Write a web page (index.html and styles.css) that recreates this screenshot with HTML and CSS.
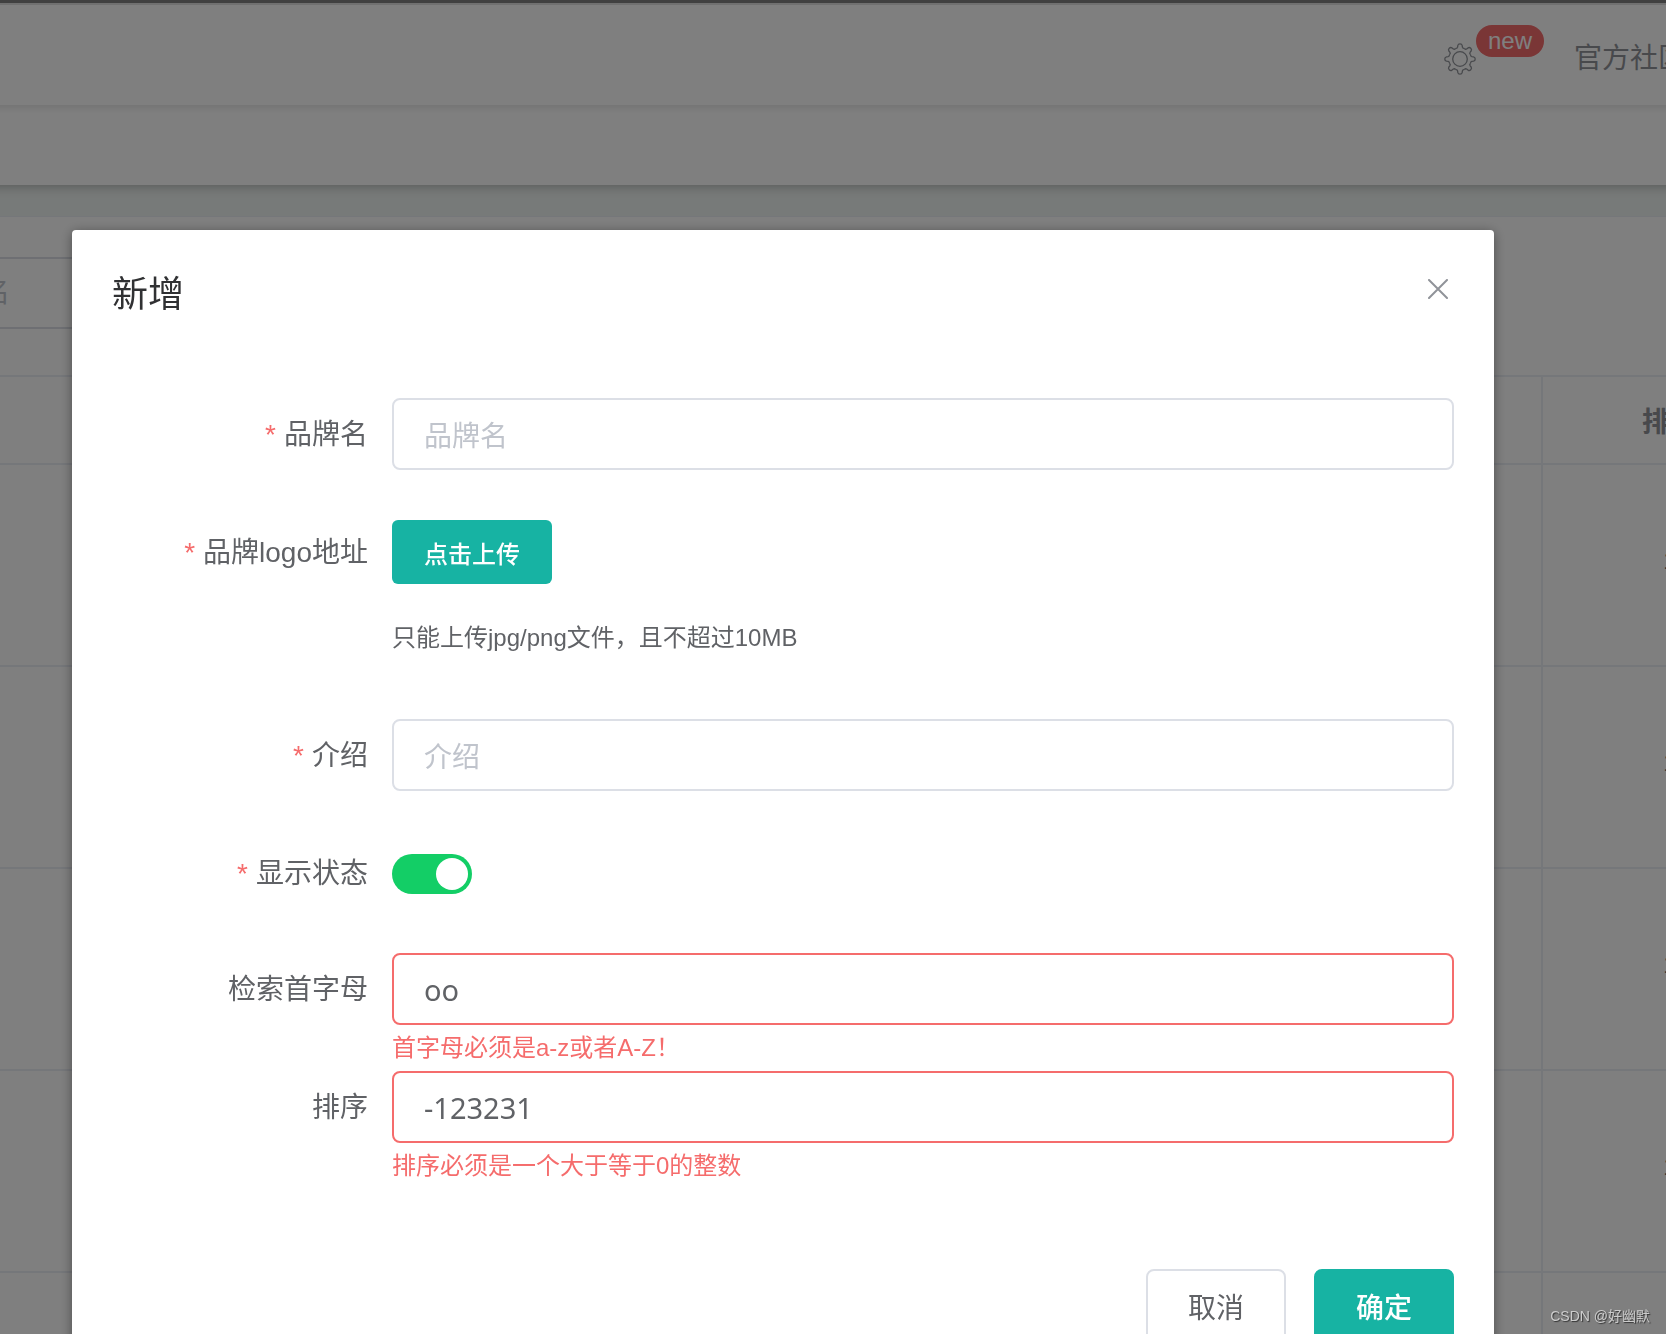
FILE: index.html
```html
<!DOCTYPE html>
<html lang="zh-CN">
<head>
<meta charset="utf-8">
<title>新增</title>
<link rel="stylesheet" href="styles.css">
</head>
<body>
<div class="page">
  <header class="navbar">
    <nav class="navbar-menu">
      <a class="navbar-link" href="#" aria-label="new">
        <svg class="gear" viewBox="0 0 32 32" fill="none" stroke="currentColor" stroke-width="1.3">
          <defs>
            <path id="tooth" d="M11.600 5.400q1.700 .3 2-1.200l.2-1.700q.3-1.700 2.200-1.700t2.200 1.700l.2 1.700q.3 1.500 2 1.200"/>
          </defs>
          <use href="#tooth"/>
          <use href="#tooth" transform="rotate(45 16 16)"/>
          <use href="#tooth" transform="rotate(90 16 16)"/>
          <use href="#tooth" transform="rotate(135 16 16)"/>
          <use href="#tooth" transform="rotate(180 16 16)"/>
          <use href="#tooth" transform="rotate(225 16 16)"/>
          <use href="#tooth" transform="rotate(270 16 16)"/>
          <use href="#tooth" transform="rotate(315 16 16)"/>
          <circle cx="16" cy="16" r="7.300"/>
        </svg>
        <sup class="badge">new</sup>
      </a>
      <a class="navbar-link" href="#">官方社区</a>
    </nav>
  </header>
  <div class="tabs"></div>
  <main class="content">
    <div class="card">
      <form class="search">
        <input class="search-input" type="text" placeholder="品牌名" aria-label="品牌名">
      </form>
      <table class="grid">
        <thead>
          <tr><th></th><th class="col-sort">排序</th></tr>
        </thead>
        <tbody>
          <tr><td></td><td class="col-sort">1</td></tr>
          <tr><td></td><td class="col-sort">1</td></tr>
          <tr><td></td><td class="col-sort">1</td></tr>
          <tr><td></td><td class="col-sort">1</td></tr>
          <tr><td></td><td class="col-sort"></td></tr>
        </tbody>
      </table>
    </div>
  </main>
</div>

<div class="overlay">
  <section class="dialog" role="dialog" aria-labelledby="dialog-title">
    <header class="dialog-header">
      <h2 class="dialog-title" id="dialog-title">新增</h2>
      <button class="dialog-close" type="button" aria-label="关闭">
        <svg class="cross" viewBox="0 0 20 20" fill="none" stroke="currentColor" stroke-width="2" stroke-linecap="round"><path d="M1 1l18 18M19 1L1 19"/></svg>
      </button>
    </header>
    <form class="form" id="brand-form">
      <div class="item">
        <label class="label required" for="name">品牌名</label>
        <div class="control"><input class="input" id="name" type="text" placeholder="品牌名"></div>
      </div>
      <div class="item">
        <label class="label required" for="logo">品牌logo地址</label>
        <div class="control">
          <button class="upload" id="logo" type="button">点击上传</button>
          <p class="tip">只能上传jpg/png文件，且不超过10MB</p>
        </div>
      </div>
      <div class="item">
        <label class="label required" for="descript">介绍</label>
        <div class="control"><input class="input" id="descript" type="text" placeholder="介绍"></div>
      </div>
      <div class="item item-switch">
        <label class="label required" for="status">显示状态</label>
        <div class="control"><input class="switch" id="status" type="checkbox" checked></div>
      </div>
      <div class="item item-error">
        <label class="label" for="letter">检索首字母</label>
        <div class="control">
          <input class="input" id="letter" type="text" value="oo">
          <p class="error">首字母必须是a-z或者A-Z！</p>
        </div>
      </div>
      <div class="item item-error">
        <label class="label" for="sort">排序</label>
        <div class="control">
          <input class="input" id="sort" type="text" value="-123231">
          <p class="error">排序必须是一个大于等于0的整数</p>
        </div>
      </div>
    </form>
    <footer class="dialog-footer">
      <button class="button" type="button">取消</button>
      <button class="button button-primary" type="submit" form="brand-form">确定</button>
    </footer>
  </section>
</div>
<div class="watermark">CSDN @好幽默</div>
</body>
</html>
```

FILE: styles.css
```css
* { box-sizing: border-box; }

html, body { height: 100%; }

body {
  margin: 0;
  overflow: hidden;
  color: #606266;
  font: 28px "Liberation Sans", "Noto Sans CJK SC", sans-serif;
}

p, h2 { margin: 0; }

input, button { font: inherit; }

/* Page behind the dialog */
.page {
  height: 100%;
  overflow: hidden;
  border-top: 3px solid #808080;
  background: #eff4f2;
}

/* Both bars run past the window so that their shadows stay even */
.navbar {
  position: relative;
  z-index: 2;
  display: flex;
  align-items: center;
  justify-content: flex-end;
  height: 102px;
  margin: 0 -20px;
  border-top: 2px solid #e0e0e0;
  background: #fff;
  box-shadow: 0 2px 8px rgba(0, 0, 0, .12);
}

.navbar-menu {
  display: flex;
  align-items: center;
  gap: 98px;
  padding-top: 8px;
}

.navbar-link {
  position: relative;
  display: block;
  color: #909399;
  line-height: 40px;
  text-decoration: none;
  white-space: nowrap;
}

.gear {
  display: block;
  width: 32px;
  height: 32px;
}

.badge {
  position: absolute;
  bottom: 18px;
  left: 32px;
  height: 32px;
  padding: 0 12px;
  border-radius: 16px;
  background: #f56c6c;
  color: #fff;
  font-size: 24px;
  line-height: 31px;
}

.tabs {
  position: relative;
  z-index: 1;
  height: 80px;
  margin: 0 -20px;
  background: #fff;
  box-shadow: 0 2px 10px rgba(0, 0, 0, .25);
}

.content { padding-top: 31px; }

.card {
  padding-top: 40px;
  border-top: 1px solid #ebeef5;
  background: #fff;
}

.search { padding-bottom: 46px; }

.search-input {
  display: block;
  width: 400px;
  height: 72px;
  margin-left: -106px;
  padding: 0 30px;
  border: 2px solid #dcdfe6;
  border-radius: 8px;
  background: #fff;
}

.search-input::placeholder { color: #c0c4cc; opacity: 1; }

.grid {
  width: calc(100% + 133px);
  border-top: 2px solid #ebeef5;
  border-spacing: 0;
  table-layout: fixed;
}

.grid th, .grid td {
  height: 202px;
  padding: 0;
  border-right: 2px solid #ebeef5;
  border-bottom: 2px solid #ebeef5;
  text-align: center;
}

.grid td {
  padding-bottom: 8px;
  font-size: 24px;
}

.grid th {
  height: 88px;
  color: #909399;
  font-weight: 700;
}

.grid .col-sort { width: 256px; }

/* Dialog */
.overlay {
  position: fixed;
  inset: 0;
  z-index: 10;
  overflow: hidden;
  padding: 230px 172px 0 72px;
  background: rgba(0, 0, 0, .5);
}

.dialog {
  padding: 40px;
  border-radius: 4px;
  background: #fff;
  box-shadow: 0 2px 12px rgba(0, 0, 0, .4);
}

.dialog-header {
  display: flex;
  justify-content: space-between;
  margin-bottom: 78px;
}

.dialog-title {
  color: #303133;
  font-size: 36px;
  font-weight: 400;
  line-height: 50px;
}

.dialog-close {
  width: 32px;
  height: 38px;
  padding: 0 6px;
  border: 0;
  background: none;
  color: #909399;
}

.cross {
  display: block;
  width: 20px;
  height: 20px;
}

.item {
  display: flex;
  align-items: flex-start;
  margin-bottom: 46px;
}

.item-switch { margin-bottom: 44px; }

.item-error { margin-bottom: 0; }

.label {
  flex: none;
  width: 280px;
  padding: 2px 24px 0 0;
  line-height: 70px;
  text-align: right;
}

.required::before {
  content: "*";
  margin-right: 8px;
  color: #f56c6c;
}

.control { flex: 1; }

.input {
  display: block;
  width: 100%;
  height: 72px;
  padding: 0 30px;
  border: 2px solid #dcdfe6;
  border-radius: 8px;
  background: #fff;
  color: #606266;
  font-family: "Noto Sans", "Noto Sans CJK SC", sans-serif;
  font-size: 29px;
}

.input::placeholder { color: #c0c4cc; font-size: 28px; opacity: 1; }

.item-error .input { border-color: #f56c6c; }

.error {
  color: #f56c6c;
  font-size: 24px;
  line-height: 46px;
}

.upload {
  display: block;
  height: 64px;
  margin-top: 4px;
  padding: 0 32px;
  border: 0;
  border-radius: 6px;
  background: #17b3a3;
  color: #fff;
  font-size: 24px;
  font-weight: 500;
}

.tip {
  margin-top: 18px;
  font-size: 24px;
  line-height: 71px;
}

.switch {
  display: block;
  width: 80px;
  height: 40px;
  margin: 17px 0 0;
  padding: 4px;
  border-radius: 20px;
  background: #13ce66;
  appearance: none;
}

.switch::before {
  content: "";
  display: block;
  width: 32px;
  height: 32px;
  border-radius: 50%;
  background: #fff;
}

.switch:checked::before { margin-left: auto; }

.dialog-footer {
  display: flex;
  justify-content: flex-end;
  gap: 28px;
  padding-top: 80px;
}

.button {
  width: 140px;
  height: 74px;
  border: 2px solid #dcdfe6;
  border-radius: 8px;
  background: #fff;
  color: #606266;
}

.button-primary {
  border-color: #17b3a3;
  background: #17b3a3;
  color: #fff;
  font-weight: 500;
}

.watermark {
  position: fixed;
  right: 16px;
  bottom: 8px;
  z-index: 20;
  color: #ccc;
  font-size: 14px;
  line-height: 20px;
  text-shadow: 1px 1px 1px #333;
}
```
